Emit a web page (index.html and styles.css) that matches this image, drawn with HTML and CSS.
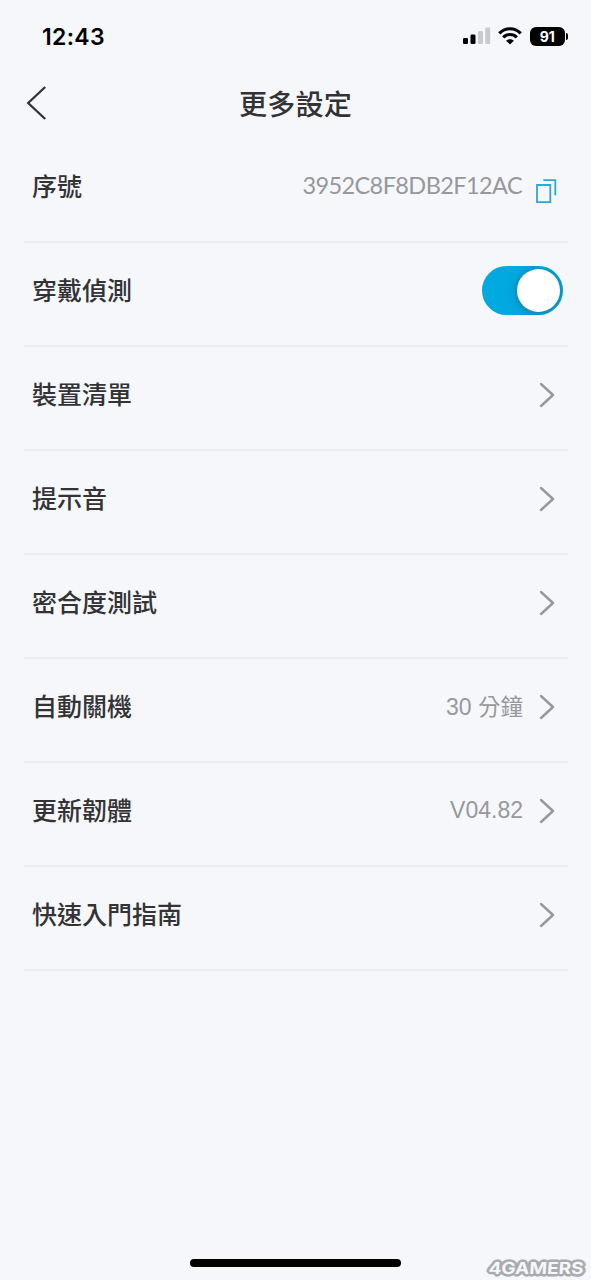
FILE: index.html
```html
<!DOCTYPE html>
<html lang="zh-Hant">
<head>
<meta charset="utf-8">
<title>更多設定</title>
<link rel="stylesheet" href="styles.css">
</head>
<body>
<div class="screen">
  <header class="status">
    <span class="time">12:43</span>
    <div class="indicators">
      <svg class="signal" width="28" height="18" viewBox="0 0 28 18">
        <rect x="0" y="11" width="5" height="6" rx="1.3"/>
        <rect x="7.5" y="7.6" width="5" height="9.4" rx="1.3"/>
        <rect class="dim" x="15" y="4" width="5" height="13" rx="1.3"/>
        <rect class="dim" x="22.2" y="0.4" width="5" height="16.6" rx="1.3"/>
      </svg>
      <svg class="wifi" width="24" height="18" viewBox="0 0 24 18">
        <path d="M1.3 6.4C7.3.2 16.7.2 22.7 6.4" fill="none" stroke="#000" stroke-width="3.2"/>
        <path d="M5.2 10.3c3.9-3.8 9.7-3.8 13.6 0" fill="none" stroke="#000" stroke-width="3.1"/>
        <path d="M12 17.6l-3.8-3.8c2-2 5.6-2 7.6 0z"/>
      </svg>
      <div class="battery"><span class="level">91</span><span class="tip"></span></div>
    </div>
  </header>

  <nav class="titlebar">
    <svg class="back" width="22" height="36" viewBox="0 0 22 36"><path d="M20.2 2L3.2 18l17 16"/></svg>
    <h1 class="title">更多設定</h1>
  </nav>

  <main class="list">
    <div class="row"><span class="label">序號</span><span class="value serial">3952C8F8DB2F12AC</span>
      <svg class="copy" width="21" height="25" viewBox="0 0 21 25"><path d="M1 6h13.3v17.2H1zM7.3 1.2h12v15"/></svg></div>
    <div class="row"><span class="label">穿戴偵測</span><span class="toggle"><span class="knob"></span></span></div>
    <div class="row"><span class="label">裝置清單</span><svg class="chevron" width="16" height="26" viewBox="0 0 16 26"><path d="M2 2l12 11L2 24"/></svg></div>
    <div class="row"><span class="label">提示音</span><svg class="chevron" width="16" height="26" viewBox="0 0 16 26"><path d="M2 2l12 11L2 24"/></svg></div>
    <div class="row"><span class="label">密合度測試</span><svg class="chevron" width="16" height="26" viewBox="0 0 16 26"><path d="M2 2l12 11L2 24"/></svg></div>
    <div class="row"><span class="label">自動關機</span><span class="value minutes">30 <span class="unit">分鐘</span></span><svg class="chevron" width="16" height="26" viewBox="0 0 16 26"><path d="M2 2l12 11L2 24"/></svg></div>
    <div class="row"><span class="label">更新韌體</span><span class="value version">V04.82</span><svg class="chevron" width="16" height="26" viewBox="0 0 16 26"><path d="M2 2l12 11L2 24"/></svg></div>
    <div class="row"><span class="label">快速入門指南</span><svg class="chevron" width="16" height="26" viewBox="0 0 16 26"><path d="M2 2l12 11L2 24"/></svg></div>
  </main>

  <div class="home"></div>
  <svg class="watermark" width="108" height="24" viewBox="0 0 108 24">
    <text x="4" y="18.5" textLength="95" lengthAdjust="spacingAndGlyphs" transform="translate(2.5 0) skewX(-4)">4GAMERS</text>
  </svg>
</div>
</body>
</html>
```
FILE: styles.css
```css
* { box-sizing: border-box; }
body { margin: 0; background: #f5f7fb; }
svg { display: block; flex: none; }

.screen {
  position: relative;
  width: 591px;
  height: 1280px;
  overflow: hidden;
  display: flex;
  flex-direction: column;
  background: #f5f7fb;
  color: #333336;
  font-family: "Noto Sans CJK TC", sans-serif;
}

.status {
  height: 72px;
  padding: 0 23px 0 42px;
  display: flex;
  align-items: center;
  justify-content: space-between;
}
.time {
  margin-top: 1px;
  font: 600 23px/30px Inter, sans-serif;
  letter-spacing: 0.3px;
  color: #000;
}
.indicators { display: flex; align-items: center; gap: 7.5px; }
.signal .dim { fill: #c9cacd; }
.battery { display: flex; align-items: center; gap: 1px; }
.level {
  width: 35.5px;
  height: 19px;
  border-radius: 6px;
  background: #000;
  color: #fff;
  font: 700 14px/19px Inter, sans-serif;
  text-align: center;
}
.tip { width: 2px; height: 7px; border-radius: 0 3px 3px 0; background: #000; }

.titlebar {
  height: 66px;
  padding: 0 25px 4px;
  display: grid;
  grid-template-columns: 22px 1fr 22px;
  align-items: center;
}
.back path { fill: none; stroke: #333336; stroke-width: 2.3; }
.title {
  margin: 0;
  text-align: center;
  font-size: 28.2px;
  line-height: 40px;
  font-weight: 500;
}

.list { margin: 1px 23px 0 24px; }
.row {
  height: 104px;
  padding: 0 13px 10px 8px;
  display: flex;
  align-items: center;
  border-bottom: 2px solid #edeef2;
}
.label {
  margin-right: auto;
  font-size: 25px;
  line-height: 36px;
  font-weight: 500;
}
.value { color: #97989b; line-height: 32px; margin-right: 16px; white-space: nowrap; }
.serial { font-family: Lato, sans-serif; font-size: 23.5px; letter-spacing: -0.6px; margin-right: 14px; }
.minutes, .version { font-family: "Liberation Sans", sans-serif; font-size: 23px; }
.version { margin-top: 2px; }
.minutes { margin-top: 2px; }
.unit { font-family: "Noto Sans CJK TC", sans-serif; font-size: 22.5px; }
.copy { margin: 12px -2px 0 0; }
.copy path { fill: none; stroke: #2ea7d2; stroke-width: 1.8; }
.chevron { margin-top: 4px; }
.chevron path { fill: none; stroke: #97989b; stroke-width: 2.4; stroke-linecap: round; stroke-linejoin: round; }

.toggle {
  width: 81px;
  height: 49px;
  margin: 3px -7.5px 0 0;
  padding: 3px;
  display: flex;
  justify-content: flex-end;
  border-radius: 25px;
  background: #00a9e0;
  overflow: hidden;
}
.knob {
  width: 43px;
  height: 43px;
  border-radius: 50%;
  background: #fff;
  box-shadow: 0 1px 9px rgba(60, 70, 90, 0.55);
}

.home {
  width: 211px;
  height: 8px;
  margin: auto auto 13px;
  border-radius: 4px;
  background: #000;
}
.watermark { position: absolute; right: 0; bottom: 0; }
.watermark text {
  font: 700 16.5px Inter, sans-serif;
  fill: #f5f7fb;
  stroke: #a9abae;
  stroke-width: 5px;
  stroke-linejoin: bevel;
  paint-order: stroke;
}
```
